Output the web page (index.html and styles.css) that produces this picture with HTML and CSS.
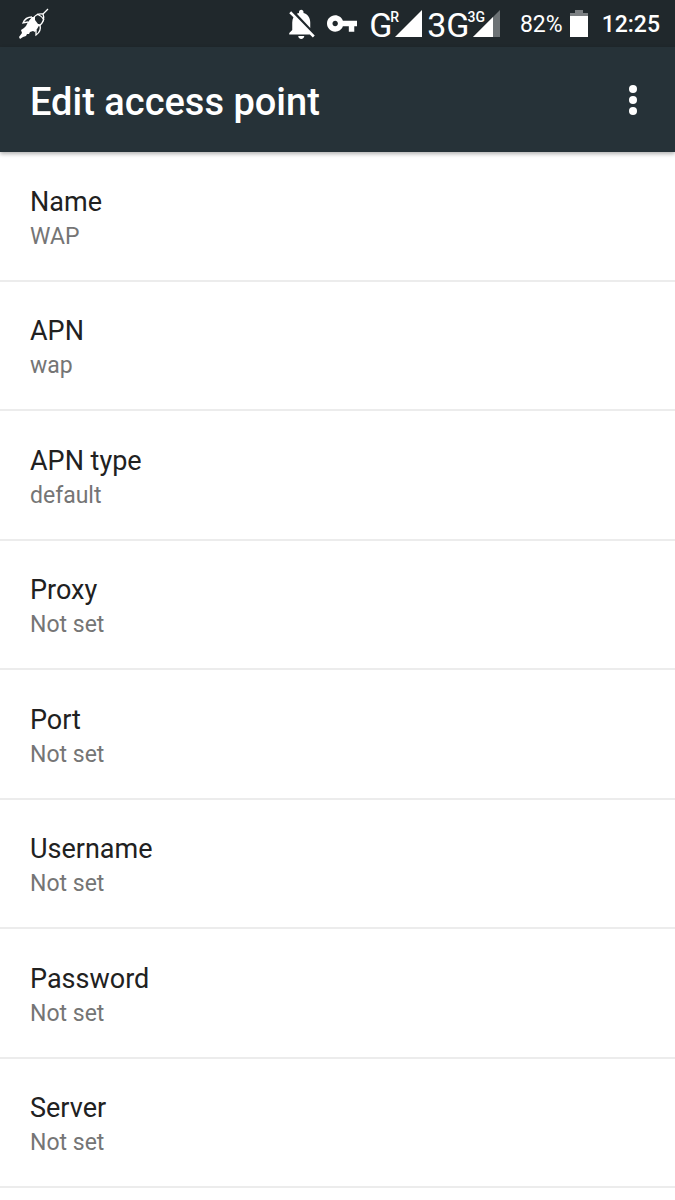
FILE: index.html
```html
<!DOCTYPE html>
<html lang="en">
<head>
    <meta charset="UTF-8">
    <meta name="viewport" content="width=device-width, initial-scale=1.0">
    <title>Edit access point</title>
    <link rel="stylesheet" href="styles.css">
</head>
<body>
    <div class="status-bar">
        <svg width="32" height="32" viewBox="0 0 32 32" fill="none" stroke="#fff" stroke-width="1.3">
            <path d="M25 6L30 1"/>
            <path d="M15 11C16 8 20 5 25 6C27 11 25 15 21 18"/>
            <path d="M19 6C22 7 24 9 26 12"/>
            <path d="M14 9C10 9 7 10 5 15L10 14"/>
            <path d="M22 17C23 21 21 25 18 27L18 22"/>
            <path d="M14 9L17 9L17 12L20 16L22 16L19 21L17 24L15 23L12 24L11 26L9 26L8 28L5 29L2 31L1 29L4 25L3 22L6 20L8 18L10 14Z" fill="#fff" stroke="none"/>
        </svg>

        <div class="status-icons">
            <svg width="26" height="30" viewBox="4 2 17 20" fill="#fff">
                <path d="M20 18.69L7.84 6.14 5.27 3.49 4 4.76l2.8 2.8v.01c-.52.99-.8 2.16-.8 3.42v5l-2 2v1h13.73l2 2L21 19.72l-1-1.03zM12 22c1.11 0 2-.89 2-2h-4c0 1.11.89 2 2 2zm6-7.32V11c0-3.08-1.64-5.64-4.5-6.32V4c0-.83-.67-1.5-1.5-1.5s-1.5.67-1.5 1.5v.68c-.15.03-.29.08-.42.12-.1.03-.2.07-.3.11-.24.09-.48.2-.71.32L18 14.68z"/>
            </svg>
            <svg class="key" width="30" height="17" viewBox="1 6 22 12" fill="#fff">
                <path d="M12.65 10C11.83 7.67 9.61 6 7 6c-3.31 0-6 2.69-6 6s2.69 6 6 6c2.61 0 4.83-1.67 5.65-4H17v4h4v-4h2v-4H12.65zM7 14c-1.1 0-2-.9-2-2s.9-2 2-2 2 .9 2 2-.9 2-2 2z"/>
            </svg>
            <div class="signal">
                <span class="network">G</span>
                <span class="network-type">R</span>
                <svg class="bars" width="27" height="27" viewBox="0 0 27 27">
                    <path d="M27 0V27H0Z" fill="#fff"/>
                </svg>
            </div>
            <div class="signal">
                <span class="network">3G</span>
                <span class="network-type">3G</span>
                <svg class="bars weak" width="27" height="27" viewBox="0 0 27 27">
                    <path d="M27 0V27H0Z" fill="#6c7275"/>
                    <path d="M20 7V27H0Z" fill="#fff"/>
                </svg>
            </div>
            <span class="battery-level">82%</span>
            <svg class="battery" width="18" height="27" viewBox="0 0 18 27">
                <path d="M5 0H13V3H18V7H0V3H5Z" fill="#7b7f82"/>
                <path d="M0 6H18V27H0Z" fill="#fff"/>
            </svg>
            <span class="time">12:25</span>
        </div>
    </div>

    <header class="toolbar">
        <h1>Edit access point</h1>
        <button class="menu-button" type="button" aria-label="More options">
            <svg width="8" height="30" viewBox="0 0 8 30" fill="#fff">
                <circle cx="4" cy="4" r="4"/>
                <circle cx="4" cy="15" r="4"/>
                <circle cx="4" cy="26" r="4"/>
            </svg>
        </button>
    </header>

    <main class="settings">
        <button class="setting" type="button">
            <span class="setting-title">Name</span>
            <span class="setting-value">WAP</span>
        </button>
        <button class="setting" type="button">
            <span class="setting-title">APN</span>
            <span class="setting-value">wap</span>
        </button>
        <button class="setting" type="button">
            <span class="setting-title">APN type</span>
            <span class="setting-value">default</span>
        </button>
        <button class="setting" type="button">
            <span class="setting-title">Proxy</span>
            <span class="setting-value">Not set</span>
        </button>
        <button class="setting" type="button">
            <span class="setting-title">Port</span>
            <span class="setting-value">Not set</span>
        </button>
        <button class="setting" type="button">
            <span class="setting-title">Username</span>
            <span class="setting-value">Not set</span>
        </button>
        <button class="setting" type="button">
            <span class="setting-title">Password</span>
            <span class="setting-value">Not set</span>
        </button>
        <button class="setting" type="button">
            <span class="setting-title">Server</span>
            <span class="setting-value">Not set</span>
        </button>
    </main>
</body>
</html>
```
FILE: styles.css
```css
* {
    box-sizing: border-box;
}
body {
    display: flex;
    flex-direction: column;
    min-height: 100vh;
    margin: 0;
    padding-bottom: 12px;
    font-family: Roboto, "Noto Sans", sans-serif;
    background-color: #ffffff;
}
svg {
    display: block;
    flex: none;
}
button {
    border: none;
    background: none;
    font-family: inherit;
    cursor: pointer;
}

/* status bar */
.status-bar {
    display: flex;
    align-items: center;
    justify-content: space-between;
    height: 47px;
    padding: 0 15px 0 18px;
    background-color: #20282c;
    color: #ffffff;
}
.status-icons {
    display: flex;
    align-items: center;
}
.key {
    margin: 0 12px;
}
.signal {
    display: flex;
    align-items: flex-start;
    height: 27px;
    margin-right: 5px;
}
.network {
    margin-right: -2px;
    font-size: 34px;
    line-height: 30px;
}
.network-type {
    font-size: 14px;
    font-weight: 500;
    line-height: 14px;
}
.bars {
    margin-left: -4px;
}
.bars.weak {
    margin-left: -12px;
}
.battery-level {
    margin-left: 15px;
    padding-top: 3px;
    font-size: 23px;
    line-height: 28px;
}
.battery {
    margin: 0 14px 0 7px;
}
.time {
    padding-top: 3px;
    font-size: 23px;
    font-weight: 500;
    line-height: 28px;
}

/* toolbar */
.toolbar {
    display: flex;
    align-items: center;
    justify-content: space-between;
    height: 105px;
    padding: 0 30px;
    background-color: #263238;
    box-shadow: 0 2px 4px rgba(0, 0, 0, 0.3);
    color: #ffffff;
}
.toolbar h1 {
    margin: 0;
    padding-top: 4px;
    font-size: 38px;
    font-weight: 500;
}
.menu-button {
    padding: 8px;
}

/* settings list */
.settings {
    display: flex;
    flex: 1;
    flex-direction: column;
}
.setting {
    display: flex;
    flex: 1;
    flex-direction: column;
    justify-content: center;
    padding: 28px 30px 22px;
    border-bottom: 2px solid #ececec;
    text-align: left;
}
.setting-title {
    color: #212121;
    font-size: 27px;
    line-height: 36px;
}
.setting-value {
    color: #757575;
    font-size: 23px;
    line-height: 34px;
}
```
